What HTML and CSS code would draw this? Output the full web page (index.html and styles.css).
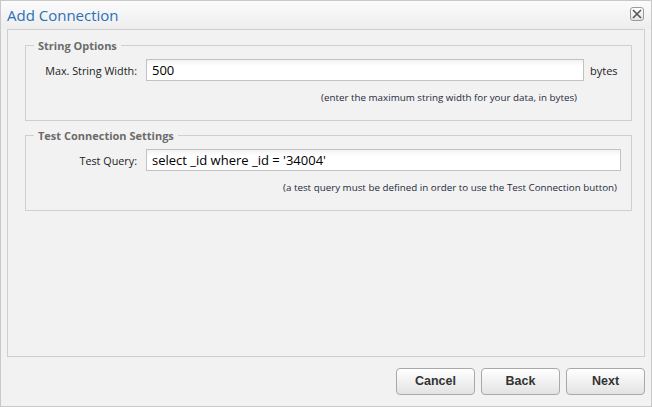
FILE: index.html
```html
<!doctype html>
<html>
<head>
	<meta charset="utf-8">
	<title>Add Connection</title>
	<link rel="stylesheet" href="styles.css">
</head>
<body>
	<div class="dialog">
		<div class="titlebar">
			<span class="title">Add Connection</span>
			<button class="close" title="Close">
				<svg width="10" height="10" viewBox="0 0 10 10"><path d="M1 1L9 9M9 1L1 9" stroke="#555" stroke-width="1.6"/></svg>
			</button>
		</div>

		<div class="panel">
			<fieldset class="group">
				<legend>String Options</legend>
				<div class="row">
					<label class="label">Max. String Width:</label>
					<input class="field short" type="text" value="500">
					<span class="unit">bytes</span>
				</div>
				<div class="hint hint-short">(enter the maximum string width for your data, in bytes)</div>
			</fieldset>

			<fieldset class="group">
				<legend>Test Connection Settings</legend>
				<div class="row">
					<label class="label">Test Query:</label>
					<input class="field wide" type="text" value="select _id where _id = '34004'">
				</div>
				<div class="hint hint-wide">(a test query must be defined in order to use the Test Connection button)</div>
			</fieldset>
		</div>

		<div class="buttons">
			<button class="btn">Cancel</button>
			<button class="btn">Back</button>
			<button class="btn">Next</button>
		</div>
	</div>
</body>
</html>
```

FILE: styles.css
```css
html,body{
	margin: 0;
	padding: 0;
	background: #fff;
	font-family: "Open Sans", "DejaVu Sans", sans-serif;
}
.dialog{
	width: 650px;
	height: 405px;
	border: 1px solid #c9c9c9;
	background: #f2f2f2;
	display: flex;
	flex-direction: column;
}
.titlebar{
	height: 28px;
	display: flex;
	align-items: center;
	justify-content: space-between;
	padding: 0 7px 0 6px;
	background: linear-gradient(#fbfbfb, #ededed);
}
.title{
	color: #2c6fb8;
	font-size: 15px;
	margin-top: -1px;
}
.close{
	width: 14px;
	height: 14px;
	padding: 0;
	border: 1px solid #9a9a9a;
	border-radius: 3px;
	background: linear-gradient(#fff, #e4e4e4);
	display: flex;
	align-items: center;
	justify-content: center;
	margin-top: -2px;
}
.panel{
	box-sizing: border-box;
	height: 328px;
	margin: 0 6px;
	border: 1px solid #cfcfcf;
	padding: 8px 12px 0 17px;
}
.group{
	margin: 0 0 7px 0;
	border: 1px solid #cfcfcf;
	padding: 6px 10px 16px 0;
}
.group legend{
	margin-left: 8px;
	padding: 0 4px;
	color: #6b6b6b;
	font-weight: bold;
	font-size: 11px;
}
.row{
	display: flex;
	align-items: center;
}
.label{
	width: 111px;
	margin-right: 9px;
	text-align: right;
	font-size: 10.8px;
	color: #222;
}
.field{
	height: 22px;
	box-sizing: border-box;
	border: 1px solid #c2c2c2;
	background: linear-gradient(#f3f3f3, #fff 6px);
	padding: 0 5px;
	font-family: "Open Sans", "DejaVu Sans", sans-serif;
	font-size: 13px;
	color: #000;
}
.short{
	width: 438px;
}
.wide{
	flex: 1;
}
.unit{
	margin-left: 6px;
	font-size: 11px;
	color: #222;
}
.hint{
	text-align: right;
	font-size: 9.8px;
	color: #1e2a3a;
	margin-top: 10px;
}
.hint-short{
	padding-right: 44px;
}
.hint-wide{
	padding-right: 4px;
}
.buttons{
	flex: 1;
	display: flex;
	justify-content: flex-end;
	align-items: center;
	gap: 6px;
	padding: 0 6px 1px 0;
}
.btn{
	width: 79px;
	height: 27px;
	border: 1px solid #a9a9a9;
	border-radius: 4px;
	background: linear-gradient(#fff, #e3e3e3);
	font-family: "Liberation Sans", Arial, sans-serif;
	font-weight: bold;
	font-size: 12.5px;
	color: #333;
}
```
